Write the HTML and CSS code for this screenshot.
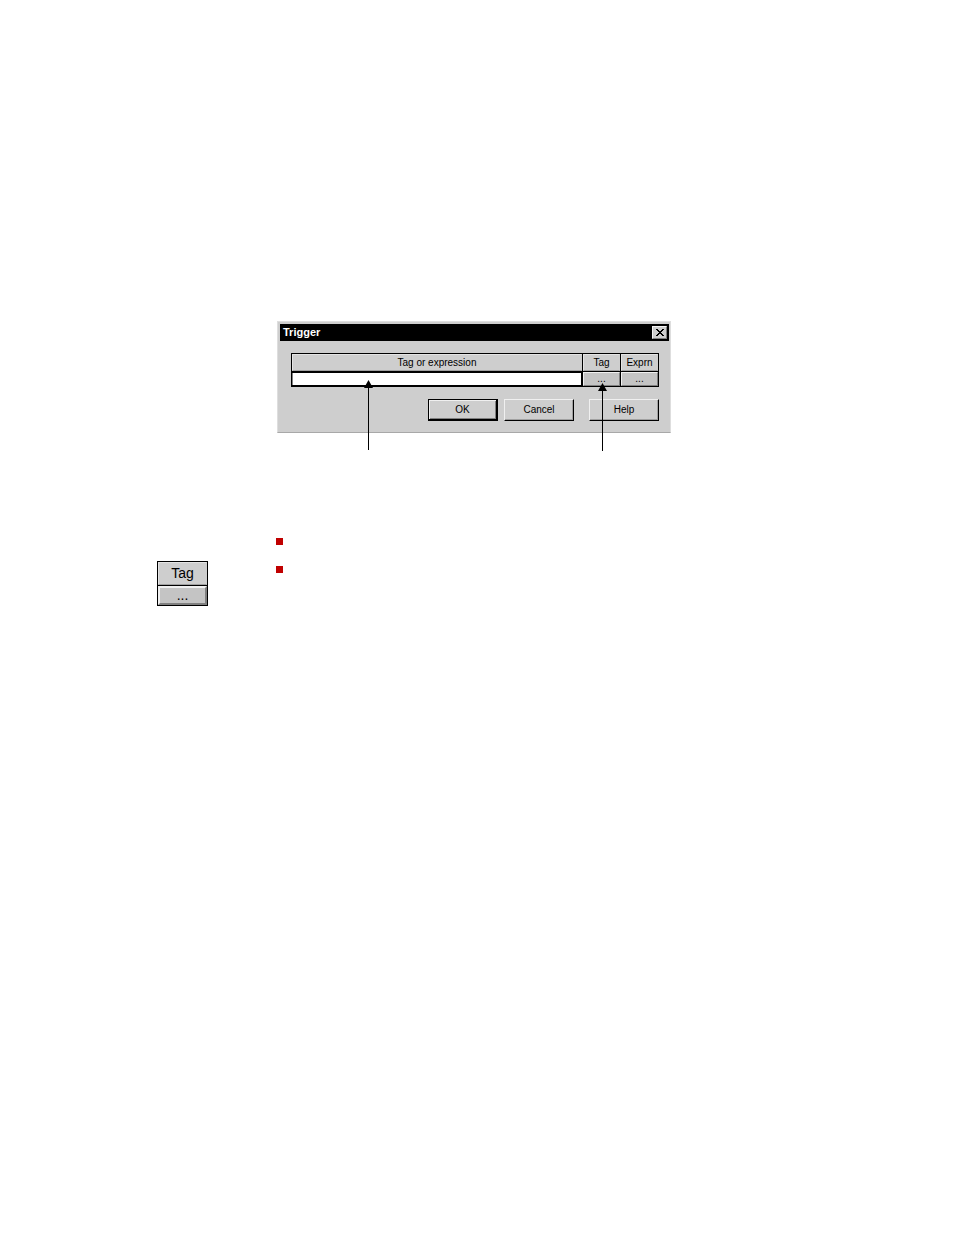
FILE: index.html
```html
<!DOCTYPE html>
<html lang="en">
<head>
    <meta charset="UTF-8">
    <meta name="viewport" content="width=device-width, initial-scale=1.0">
    <title>Trigger</title>
    <link rel="stylesheet" href="styles.css">
</head>
<body>
    <main class="page">
        <section class="figure">
            <div class="dialog" role="dialog" aria-labelledby="dialogTitle">
                <div class="title-bar">
                    <h1 id="dialogTitle">Trigger</h1>
                    <button class="close-btn" type="button" aria-label="Close">
                        <svg width="8" height="7" viewBox="0 0 8 7" shape-rendering="crispEdges">
                            <path d="M0 0h2v1h1v1h2v-1h1v-1h2v1h-1v1h-1v1h-1v1h1v1h1v1h1v1h-2v-1h-1v-1h-2v1h-1v1h-2v-1h1v-1h1v-1h1v-1h-1v-1h-1v-1h-1z"/>
                        </svg>
                    </button>
                </div>
                <div class="dialog-body">
                    <table class="tag-table">
                        <thead>
                            <tr>
                                <th id="exprLabel">Tag or expression</th>
                                <th class="narrow">Tag</th>
                                <th class="narrow">Exprn</th>
                            </tr>
                        </thead>
                        <tbody>
                            <tr>
                                <td class="field"><input type="text" aria-labelledby="exprLabel"></td>
                                <td><button class="browse-btn" type="button">...</button></td>
                                <td><button class="browse-btn" type="button">...</button></td>
                            </tr>
                        </tbody>
                    </table>
                    <div class="actions">
                        <button class="btn btn-default" type="button">OK</button>
                        <button class="btn" type="button">Cancel</button>
                        <button class="btn btn-help" type="button">Help</button>
                    </div>
                </div>
            </div>

            <!-- Callout arrows -->
            <svg class="arrow arrow-field" width="9" height="70" viewBox="0 0 9 70">
                <path d="M4.5 0L9 8H0z"/>
                <path d="M4 7h1v63h-1z"/>
            </svg>
            <svg class="arrow arrow-tag" width="9" height="68" viewBox="0 0 9 68">
                <path d="M4.5 0L9 8H0z"/>
                <path d="M4 7h1v61h-1z"/>
            </svg>
        </section>

        <section class="notes">
            <table class="tag-table tag-large">
                <thead>
                    <tr><th>Tag</th></tr>
                </thead>
                <tbody>
                    <tr><td><button class="browse-btn" type="button">...</button></td></tr>
                </tbody>
            </table>
            <ul class="steps">
                <li></li>
                <li></li>
            </ul>
        </section>
    </main>
</body>
</html>
```

FILE: styles.css
```css
* {
    margin: 0;
    padding: 0;
    box-sizing: border-box;
}

body {
    background: #fff;
    color: #000;
    font-family: "Liberation Sans", Arial, sans-serif;
    font-size: 10px;
}

button,
input {
    font: inherit;
    color: inherit;
    border: none;
    border-radius: 0;
}

.page {
    padding: 321px 16px 40px 157px;
}

/* Dialog */
.figure {
    position: relative;
    max-width: 514px;
    padding-left: 120px;
}

.dialog {
    background: #cecece;
    border: 1px solid #dedede;
    border-right-color: #dedede;
    border-bottom-color: #a8a8a8;
    padding: 2px 1px 1px 2px;
}

.title-bar {
    display: flex;
    justify-content: space-between;
    align-items: center;
    height: 17px;
    padding: 0 2px 0 3px;
    background: #000;
    color: #fff;
}

.title-bar h1 {
    font-size: 11px;
    line-height: 17px;
}

.close-btn {
    display: flex;
    align-items: center;
    justify-content: center;
    width: 15px;
    height: 13px;
    background: #cecece;
    border: 1px solid #f4f4f4;
    border-right-color: #808080;
    border-bottom-color: #808080;
}

.dialog-body {
    padding: 12px 10px 10px 11px;
}

/* Tag table */
.tag-table {
    width: 100%;
    table-layout: fixed;
    border-collapse: separate;
    border-spacing: 1px;
    background: #000;
}

.tag-table th {
    height: 17px;
    background: #cecece;
    border: 1px solid #e4e4e4;
    border-right-color: #cecece;
    border-bottom-color: #a0a0a0;
    font-weight: normal;
    line-height: 15px;
}

.tag-table .narrow {
    width: 37px;
}

.tag-table td {
    height: 14px;
}

.field {
    padding: 1px 0;
}

.field input {
    display: block;
    width: 100%;
    height: 12px;
    padding: 0 2px;
    background: #fff;
    border-left: 1px solid #808080;
    border-right: 1px solid #000;
    outline: none;
}

.browse-btn {
    display: block;
    width: 100%;
    height: 14px;
    background: #c4c4c4;
    border: 1px solid #f0f0f0;
    border-right-color: #808080;
    border-bottom-color: #808080;
    line-height: 12px;
}

/* Buttons */
.actions {
    display: flex;
    justify-content: flex-end;
    gap: 6px;
    margin-top: 12px;
}

.btn {
    width: 70px;
    height: 22px;
    background: #cecece;
    border: 1px solid #f0f0f0;
    border-right-color: #000;
    border-bottom-color: #000;
    box-shadow: inset -1px -1px #a0a0a0;
    line-height: 20px;
}

.btn-default {
    border: 1px solid #000;
    border-right-width: 2px;
    border-bottom-width: 2px;
    box-shadow: inset 1px 1px #f0f0f0, inset -1px -1px #808080;
}

.btn-help {
    margin-left: 9px;
}

/* Arrows lie over the dialog and run out below it */
.arrow {
    position: absolute;
    pointer-events: none;
}

.arrow-field {
    left: 207px;
    top: 59px;
}

.arrow-tag {
    right: 64px;
    top: 62px;
}

/* Notes under the dialog */
.notes {
    display: flex;
    align-items: flex-start;
    gap: 68px;
    margin-top: 94px;
}

.tag-large {
    width: 51px;
    margin-top: 34px;
    font-size: 14px;
}

.tag-large th {
    height: 23px;
    line-height: 21px;
}

.tag-large .browse-btn {
    height: 19px;
    border-width: 2px;
    line-height: 15px;
}

.steps {
    list-style: none;
}

.steps li {
    display: flex;
    align-items: center;
    height: 28px;
}

.steps li::before {
    content: "";
    width: 7px;
    height: 7px;
    background: #c00000;
}
```
